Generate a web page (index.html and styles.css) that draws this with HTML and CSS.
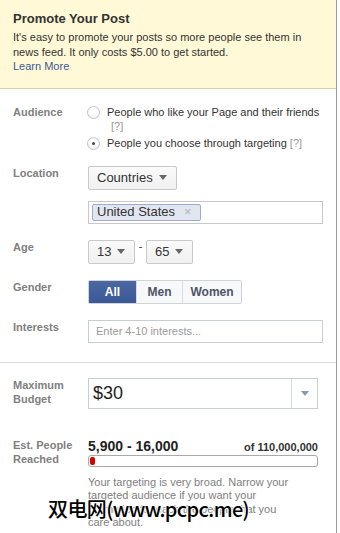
FILE: index.html
```html
<!DOCTYPE html>
<html lang="en">
<head>
    <meta charset="UTF-8">
    <meta name="viewport" content="width=device-width, initial-scale=1.0">
    <title>Promote Your Post</title>
    <link rel="stylesheet" href="styles.css">
</head>
<body>
    <div class="panel">
        <!-- Intro -->
        <div class="promo">
            <h1>Promote Your Post</h1>
            <p>It's easy to promote your posts so more people see them in news feed. It only costs $5.00 to get started.<br>
                <a href="#">Learn More</a></p>
        </div>

        <!-- Targeting -->
        <div class="targeting">
            <div class="row">
                <div class="label">Audience</div>
                <div class="field">
                    <label class="option">
                        <span class="radio"></span>
                        <span>People who like your Page and their friends<span class="help help-block">[?]</span></span>
                    </label>
                    <label class="option option-gap">
                        <span class="radio checked"></span>
                        <span>People you choose through targeting <span class="help">[?]</span></span>
                    </label>
                </div>
            </div>

            <div class="row">
                <div class="label">Location</div>
                <div class="field">
                    <button class="dropdown">Countries <span class="caret"></span></button>
                    <div class="token-box">
                        <span class="token">United States <span class="token-x">&times;</span></span>
                    </div>
                </div>
            </div>

            <div class="row">
                <div class="label">Age</div>
                <div class="field age">
                    <button class="dropdown small">13 <span class="caret"></span></button>
                    <span class="dash">-</span>
                    <button class="dropdown small">65 <span class="caret"></span></button>
                </div>
            </div>

            <div class="row">
                <div class="label">Gender</div>
                <div class="field">
                    <div class="segmented">
                        <button class="seg active">All</button>
                        <button class="seg">Men</button>
                        <button class="seg">Women</button>
                    </div>
                </div>
            </div>

            <div class="row last">
                <div class="label">Interests</div>
                <div class="field">
                    <input class="text-input" type="text" placeholder="Enter 4-10 interests...">
                </div>
            </div>
        </div>

        <!-- Budget -->
        <div class="budget">
            <div class="row">
                <div class="label">Maximum<br>Budget</div>
                <div class="field">
                    <div class="budget-select">
                        <span class="budget-value">$30</span>
                        <span class="budget-arrow"><span class="caret light"></span></span>
                    </div>
                </div>
            </div>

            <div class="row reach-row">
                <div class="label">Est. People<br>Reached</div>
                <div class="field">
                    <div class="reach-head">
                        <span class="reach-range">5,900 - 16,000</span>
                        <span class="reach-total">of 110,000,000</span>
                    </div>
                    <div class="meter"><div class="meter-fill" style="width: 2%"></div></div>
                    <p class="reach-note">Your targeting is very broad. Narrow your<br>
                        targeted audience if you want your<br>
                        promotion to reach the people that you<br>
                        care about.</p>
                </div>
            </div>
        </div>

        <div class="watermark">双电网(www.pcpc.me)</div>
    </div>
</body>
</html>
```

FILE: styles.css
```css
body, html {
    margin: 0;
    padding: 0;
    background-color: #fff;
    font-family: "Liberation Sans", Arial, sans-serif;
    font-size: 11px;
    color: #333;
}
.panel {
    position: relative;
    width: 336px;
    height: 533px;
    border-right: 1px solid #9a9a9a;
    overflow: hidden;
}
.promo {
    background-color: #fff9d7;
    border-bottom: 1px solid #d8d49a;
    padding: 11px 13px 14px 13px;
}
.promo h1 {
    margin: 0;
    font-size: 13px;
    line-height: 16px;
    color: #333;
}
.promo p {
    margin: 3px 0 0 0;
    line-height: 14.5px;
}
.promo a {
    color: #3b5998;
    text-decoration: none;
}
.targeting {
    padding: 16px 13px 19px 13px;
    border-bottom: 1px solid #dddddd;
}
.budget {
    padding: 15px 13px 0 13px;
}
.row {
    display: grid;
    grid-template-columns: 75px 1fr;
    margin-bottom: 16px;
}
.row.last {
    margin-bottom: 0;
}
.label {
    font-weight: bold;
    color: #808080;
    line-height: 14px;
}
.field {
    line-height: 14px;
}
.option {
    display: flex;
    align-items: flex-start;
    gap: 7px;
    color: #333;
}
.option-gap {
    margin-top: 3px;
}
.radio {
    flex: none;
    width: 11px;
    height: 11px;
    margin: 1px 0 0 -1px;
    border: 1px solid #c4c4c4;
    border-radius: 50%;
    background: radial-gradient(circle at 50% 40%, #fff 40%, #e6e6e6 100%);
    position: relative;
}
.radio.checked::after {
    content: "";
    position: absolute;
    left: 4px;
    top: 4px;
    width: 3px;
    height: 3px;
    border-radius: 50%;
    background-color: #444;
}
.help {
    color: #999;
}
.help-block {
    display: block;
    margin-left: 4px;
}
.dropdown {
    display: inline-flex;
    align-items: center;
    gap: 6px;
    height: 24px;
    padding: 0 9px 0 8px;
    font-family: "Liberation Sans", Arial, sans-serif;
    font-size: 13px;
    color: #333;
    background: linear-gradient(#fafafa, #f0f0f0);
    border: 1px solid #c9c9c9;
    border-radius: 2px;
    box-sizing: border-box;
}
.dropdown.small {
    width: 47px;
    padding: 0 7px 0 8px;
}
.caret {
    display: inline-block;
    width: 0;
    height: 0;
    border-left: 4px solid transparent;
    border-right: 4px solid transparent;
    border-top: 5px solid #666;
}
.caret.light {
    border-top-color: #8b99b4;
}
.age {
    display: flex;
    align-items: flex-start;
}
.dash {
    width: 11px;
    text-align: center;
    line-height: 12px;
    color: #333;
}
.token-box {
    margin-top: 11px;
    height: 23px;
    border: 1px solid #c8c8c8;
    box-sizing: border-box;
    padding: 2px 3px;
}
.token {
    display: inline-flex;
    align-items: center;
    gap: 9px;
    height: 17px;
    padding: 0 8px 0 4px;
    font-size: 13px;
    color: #333;
    background-color: #e2e6f0;
    border: 1px solid #9dacc8;
    border-radius: 2px;
    box-sizing: border-box;
}
.token-x {
    color: #b0b4bc;
    font-size: 13px;
}
.segmented {
    display: inline-flex;
    height: 24px;
    border: 1px solid #cfd3da;
    border-radius: 2px;
    box-sizing: border-box;
}
.seg {
    font-family: "Liberation Sans", Arial, sans-serif;
    font-size: 12px;
    font-weight: bold;
    color: #4e5665;
    background-color: #f7f8fa;
    border: none;
    border-left: 1px solid #d8dbe0;
    padding: 0;
    height: 22px;
}
.seg:nth-child(1) {
    width: 47px;
    border-left: none;
}
.seg:nth-child(2) {
    width: 46px;
}
.seg:nth-child(3) {
    width: 59px;
}
.seg.active {
    color: #fff;
    background: linear-gradient(#4c67a1, #3b5998);
}
.text-input {
    display: block;
    width: 100%;
    height: 23px;
    box-sizing: border-box;
    border: 1px solid #c8ccd4;
    padding: 0 7px;
    font-family: "Liberation Sans", Arial, sans-serif;
    font-size: 11px;
}
.text-input::placeholder {
    color: #9a9a9a;
}
.budget-select {
    display: flex;
    width: 230px;
    height: 31px;
    box-sizing: border-box;
    border: 1px solid #c8ccd4;
}
.budget-value {
    flex: 1;
    padding-left: 4px;
    font-size: 18px;
    line-height: 29px;
    color: #222;
}
.budget-arrow {
    width: 25px;
    border-left: 1px solid #d6d9de;
    display: flex;
    align-items: center;
    justify-content: center;
}
.reach-row {
    margin-top: 29px;
}
.reach-head {
    display: flex;
    justify-content: space-between;
    align-items: baseline;
    width: 230px;
}
.reach-range {
    font-size: 14px;
    font-weight: bold;
    line-height: 16px;
    color: #222;
}
.reach-total {
    font-size: 11px;
    font-weight: bold;
    color: #333;
}
.meter {
    width: 230px;
    height: 12px;
    margin-top: 1px;
    box-sizing: border-box;
    border: 1px solid #aaa;
    border-radius: 3px;
    padding: 1px;
}
.meter-fill {
    height: 100%;
    background-color: #d40000;
    border-radius: 2px;
}
.reach-note {
    margin: 9px 0 0 0;
    width: 230px;
    white-space: nowrap;
    line-height: 13.5px;
    color: #808080;
}
.watermark {
    position: absolute;
    left: 48px;
    top: 498px;
    font-family: "Noto Sans CJK SC", sans-serif;
    font-size: 20px;
    font-weight: 500;
    letter-spacing: -0.6px;
    line-height: 22px;
    color: #000;
    text-shadow: 1px 0 #fff, -1px 0 #fff, 0 1px #fff, 0 -1px #fff;
}
```
